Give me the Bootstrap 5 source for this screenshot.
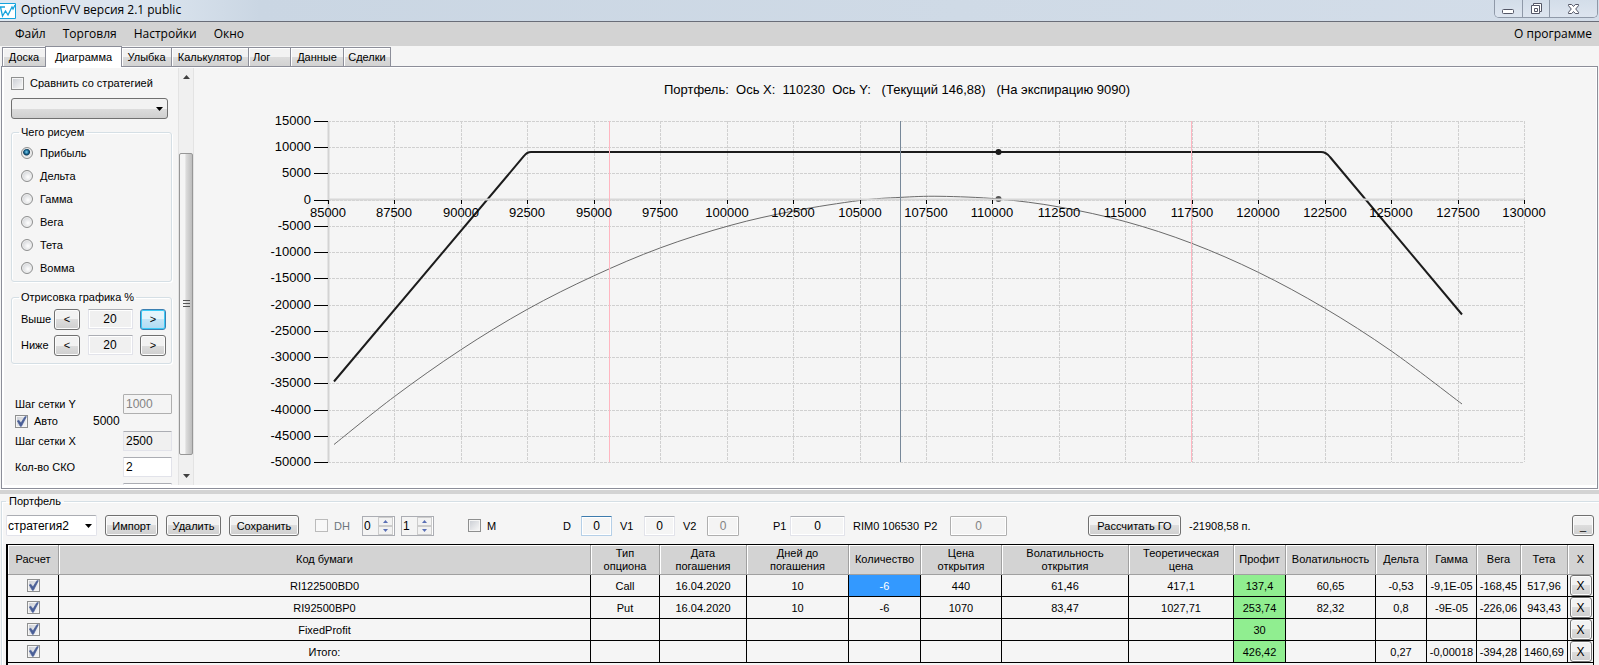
<!DOCTYPE html>
<html lang="ru">
<head>
<meta charset="utf-8">
<meta name="viewport" content="width=device-width, initial-scale=1">
<title>OptionFVV версия 2.1 public</title>
<link href="https://cdn.jsdelivr.net/npm/bootstrap@5.3.0/dist/css/bootstrap.min.css" rel="stylesheet">
<style>
  :root { --face:#f5f5f5; --edge:#8c8e99; --line:#d5dfe5; }
  body { height:100vh; background:var(--face); color:#000; font:11px/14px "Liberation Sans",Arial,sans-serif; overflow:hidden; }
  button, input, select { font:inherit; color:inherit; }

  /* window frame */
  .titlebar { height:22px; background:linear-gradient(90deg,#dfe7f0 0,#dbe4ee 150px,#cad6e3 260px,#cfdae6 60%,#d3dde9); border-bottom:1px solid #696d78; font:12px/20px "Open Sans","Noto Sans",sans-serif; }
  .titlebar > svg { flex:none; margin:3px 5px 0 0; }
  .winbtns { height:18px; border:1px solid #8f99a8; border-top:0; border-radius:0 0 5px 5px; overflow:hidden; margin-right:1px; }
  .winbtns button { border:0; border-left:1px solid #8f99a8; padding:0; background:linear-gradient(#d3dde9,#dde5ef); width:27px; }
  .winbtns button:first-child { border-left:0; }
  .winbtns button:last-child { width:48px; }
  .winbtns svg { display:block; margin:0 auto; }
  .menubar { height:24px; background:#d3d3d3; font:12px/24px "Open Sans","Noto Sans",sans-serif; padding:0 7px 0 15px; gap:17px; }
  .menubar a { color:#000; text-decoration:none; }

  /* tabs */
  .tabstrip { height:20px; padding-left:2px; }
  .tabstrip button { height:19px; border:1px solid var(--edge); border-bottom:0; margin-right:-1px; padding:0; background:linear-gradient(#f2f2f2 50%,#dcdcdc 50%,#d2d2d2); box-shadow:inset 1px 1px #fff; line-height:18px; white-space:nowrap; }
  .tabstrip button.active { height:21px; background:#fff; margin-bottom:-1px; position:relative; z-index:1; }
  .page { border:1px solid var(--edge); margin:0 1px; padding:1px 1px 3px 2px; background:#fff; min-height:0; }
  .page > div { background:var(--face); }

  /* side panel */
  .side { width:174px; overflow:hidden; padding:0 6px 0 7px; }
  .side > * { flex:none; }
  .frame-box { border:1px solid var(--line); border-radius:3px; box-shadow:1px 1px #fff, inset 1px 1px #fff; min-width:0; padding:0 9px 2px; margin-top:6px; }
  .frame-box legend { float:none; width:auto; margin:0 0 2px -2px; font-size:11px; line-height:14px; padding:0 2px; }
  .frame-box.range { padding:0 5px 5px 9px; margin-top:8px; }
  .tick { appearance:none; flex:none; width:13px; height:13px; margin:0; border:1px solid #8e8f8f; background:linear-gradient(135deg,#cdd0d6,#f6f6f6) content-box #f4f4f4; padding:1px; }
  .tick:checked { background:url("data:image/svg+xml,%3Csvg xmlns='http://www.w3.org/2000/svg' viewBox='0 0 11 11'%3E%3Cpath d='M2 5l1.2-.6L5 6.8 8.4 1.4h1.2L5.4 9.6h-.9z' fill='%234a5f97' stroke='%234a5f97' stroke-width='.6'/%3E%3C/svg%3E") border-box, linear-gradient(135deg,#cdd0d6,#f6f6f6) content-box #f4f4f4; }
  .tick:disabled { border-color:#bbb; background:#f8f8f8; }
  .tick-row { gap:6px; }
  .dot { appearance:none; flex:none; width:12px; height:12px; margin:0; border:1px solid #8e8f8f; border-radius:50%; background:radial-gradient(circle at 60% 60%,#fff,#c3c6cb); box-shadow:inset 0 0 0 1px #eee; }
  .dot:checked { background:radial-gradient(circle at 45% 40%,#7fd0f0 0,#1a6a94 2px,#0d3a58 3px,#e8e8e8 4px); }
  .radio-row { height:23px; gap:7px; }
  .combo { appearance:none; border:1px solid #707070; border-radius:3px; padding:0 4px; height:21px; background:url("data:image/svg+xml,%3Csvg xmlns='http://www.w3.org/2000/svg' width='7' height='4'%3E%3Cpath d='M0 0h7L3.5 4z'/%3E%3C/svg%3E") right 4px center no-repeat, linear-gradient(#f2f2f2 50%,#dddddd 50%,#cfcfcf); }
  .combo-flat { background-image:url("data:image/svg+xml,%3Csvg xmlns='http://www.w3.org/2000/svg' width='7' height='4'%3E%3Cpath d='M0 0h7L3.5 4z'/%3E%3C/svg%3E"); background-color:#fff; border-color:#e2e3ea; border-top-color:#abadb3; border-radius:2px; padding:0 1px; width:91px; }
  .pushbtn { border:1px solid #707070; border-radius:3px; padding:0; height:21px; line-height:18px; background:linear-gradient(#f2f2f2 50%,#dddddd 50%,#cfcfcf); box-shadow:inset 0 0 0 1px #fcfcfc; white-space:nowrap; flex:none; }
  .pushbtn.hot { border-color:#3c7fb1; background:linear-gradient(#e5f5fc 50%,#c4e5f6 50%,#b0dcf4); box-shadow:inset 0 0 0 1px #3ccbf7; }
  .pushbtn.step { width:26px; }
  .field { border:1px solid #e2e3ea; border-top-color:#abadb3; border-radius:1px; height:20px; padding:0 2px; min-width:0; background:#fff; flex:none; }
  .field.flat { background:var(--face); text-align:center; box-shadow:inset 0 0 0 1px #fff; }
  .field.ro { background:#f0f0f0; }
  .field:disabled { border-color:#afafaf; color:#838383; background:#f4f4f4; }
  .field.focused { border-color:#b5cfe7; border-top-color:#3d7bad; }
  .w-field { width:49px; font-size:12px; }
  .digits { font-size:12px; }
  .param { height:26px; }
  .settings { margin-top:30px; padding-left:4px; }

  /* scroll bar */
  .scroller { width:16px; background:#f0f0f0 !important; border-left:1px solid #e3e3e3; border-right:1px solid #e3e3e3; flex:none; }
  .scroller button { border:0; padding:0; height:18px; background:none; width:14px; }
  .scroller svg { display:block; margin:0 auto; }
  .thumb { border:1px solid #979797; border-radius:2px; background:linear-gradient(90deg,#f5f5f5 40%,#dcdcdc 50%,#bdbdbd); flex:302 0 0; }
  .track-a { flex:67 0 0; }
  .track-b { flex:12 0 0; }
  .chart text { font-family:"Liberation Sans",Arial,sans-serif; font-size:13px; }
  .splitbar { height:5px; border-top:1px solid #fff; background:#d3d3d3; flex:none; }

  /* portfolio */
  .portfolio { margin:0 0 0 1px; padding:0 5px 0 4px; border:1px solid var(--line); border-bottom:0; border-right:0; box-shadow:inset 1px 1px #fff; flex:none; min-width:0; height:171px; }
  .portfolio > legend { float:none; width:auto; margin:0; font-size:11px; line-height:15px; padding:0 3px; }
  .toolbar { height:35px; padding-bottom:2px; white-space:nowrap; }
  .toolbar label { flex:none; }
  .spin { width:33px; height:20px; border:1px solid #abadb3; background:#fff; flex:none; }
  .spin + .spin { margin-left:6px; }
  .spin input { border:0; padding:0 0 0 1px; width:15px; background:#f4f4f4; font-size:12px; }
  .spin button { border:1px solid #ccc; padding:0; flex:1; background:#f2f2f2; width:15px; min-height:0; }
  .spin svg { display:block; margin:0 auto; }
  .far { margin-left:34px; }
  .calc { width:93px; margin-left:81px; }
  .grid { --bs-table-bg:var(--face); --bs-table-color:#000; margin:0; table-layout:fixed; border:1px solid #000; border-left-width:2px; border-bottom:0; text-align:center; border-collapse:separate; border-spacing:0; }
  .grid > :not(caption) > * > * { padding:0; vertical-align:middle; white-space:nowrap; }
  .grid thead th { font-weight:400; line-height:13px; height:30px; background:#d3d3d3; border:0; border-bottom:1px solid #a0a0a0; border-right:1px solid #a0a0a0; box-shadow:inset 1px 1px #fff; }
  .grid tbody td { height:22px; border:0; border-bottom:1px solid #000; border-right:1px solid #000; }
  .grid tr > :last-child { border-right:0; }
  .grid td.gain { background:#90ee90; }
  .grid td.picked { background:#3399ff; color:#fff; }
  .grid .tick { display:block; margin:0 auto; }
  .grid .pushbtn { width:22px; height:21px; display:block; margin:0 auto; font-size:12px; }
  .tail td { height:3px !important; border-bottom:0 !important; border-right:0 !important; }
</style>
</head>
<body class="d-flex flex-column">

<header class="titlebar d-flex flex-shrink-0">
  <svg width="16" height="16" viewBox="0 0 16 16"><path d="M0 .5h15.500v15H0" fill="#fff" stroke="#17a3dd"/><path d="M0 4h5M.5 4l2 9 3-5 2.500 4 4-8 1 2 2-4" fill="none" stroke="#17a3dd" stroke-width="1.300"/></svg>
  <span>OptionFVV версия 2.1 public</span>
  <div class="winbtns d-flex ms-auto">
    <button type="button" aria-label="Свернуть"><svg width="13" height="15" viewBox="0 0 13 15"><rect x=".5" y="8.500" width="11" height="4" rx="1" fill="#fff" stroke="#535666"/></svg></button>
    <button type="button" aria-label="Развернуть"><svg width="13" height="15" viewBox="0 0 13 15"><path d="M3.500 2.500h8v8h-2v2h-8v-8h2z" fill="#fff" stroke="#535666"/><path d="M3.500 4.500h6v6M4.500 7.500h3v3h-3z" fill="none" stroke="#535666"/></svg></button>
    <button type="button" aria-label="Закрыть"><svg width="13" height="15" viewBox="0 0 13 15"><path d="M1.500 3.500h3.200l1.800 2 1.800-2h3.200v1.200L8.700 8l2.800 3.300v1.200H8.300l-1.800-2-1.800 2H1.500v-1.200L4.300 8 1.500 4.700z" fill="#fff" stroke="#535666"/></svg></button>
  </div>
</header>

<nav class="menubar d-flex flex-shrink-0">
  <a href="#">Файл</a><a href="#">Торговля</a><a href="#">Настройки</a><a href="#">Окно</a>
  <a href="#" class="ms-auto">О программе</a>
</nav>

<div class="tabstrip d-flex align-items-end flex-shrink-0" role="tablist">
  <button role="tab" style="width:44px">Доска</button>
  <button role="tab" class="active" style="width:77px">Диаграмма</button>
  <button role="tab" style="width:51px">Улыбка</button>
  <button role="tab" style="width:78px">Калькулятор</button>
  <button role="tab" class="text-start ps-1" style="width:43px">Лог</button>
  <button role="tab" style="width:54px">Данные</button>
  <button role="tab" style="width:48px">Сделки</button>
</div>

<main class="page d-flex flex-grow-1">
  <div class="side d-flex flex-column flex-shrink-0">
    <label class="tick-row d-flex align-items-center mt-2"><input type="checkbox" class="tick">Сравнить со стратегией</label>
    <select class="combo mt-2 me-1" aria-label="Стратегия"><option></option></select>

    <fieldset class="frame-box">
      <legend>Чего рисуем</legend>
      <label class="radio-row d-flex align-items-center"><input type="radio" name="what" class="dot" checked>Прибыль</label>
      <label class="radio-row d-flex align-items-center"><input type="radio" name="what" class="dot">Дельта</label>
      <label class="radio-row d-flex align-items-center"><input type="radio" name="what" class="dot">Гамма</label>
      <label class="radio-row d-flex align-items-center"><input type="radio" name="what" class="dot">Вега</label>
      <label class="radio-row d-flex align-items-center"><input type="radio" name="what" class="dot">Тета</label>
      <label class="radio-row d-flex align-items-center"><input type="radio" name="what" class="dot">Вомма</label>
    </fieldset>

    <fieldset class="frame-box range">
      <legend>Отрисовка графика %</legend>
      <div class="param d-flex align-items-center">
        <label for="up" style="width:33px">Выше</label><button class="pushbtn step">&lt;</button>
        <input id="up" class="field flat ro digits mx-auto" style="width:45px" value="20"><button class="pushbtn step hot">&gt;</button>
      </div>
      <div class="param d-flex align-items-center">
        <label for="down" style="width:33px">Ниже</label><button class="pushbtn step">&lt;</button>
        <input id="down" class="field flat ro digits mx-auto" style="width:45px" value="20"><button class="pushbtn step">&gt;</button>
      </div>
    </fieldset>

    <div class="settings d-flex flex-column">
      <div class="d-flex align-items-center justify-content-between"><label for="gy">Шаг сетки Y</label><input id="gy" class="field w-field" value="1000" disabled></div>
      <div class="d-flex align-items-center"><label class="tick-row d-flex align-items-center" style="width:78px"><input type="checkbox" class="tick" checked>Авто</label><span class="digits">5000</span></div>
      <div class="param d-flex align-items-center justify-content-between"><label for="gx">Шаг сетки X</label><input id="gx" class="field ro w-field" value="2500"></div>
      <div class="param d-flex align-items-center justify-content-between"><label for="sko">Кол-во СКО</label><input id="sko" class="field w-field" value="2"></div>
      <div class="param d-flex align-items-center justify-content-end"><input class="field w-field" aria-label="Параметр"></div>
    </div>
  </div>

  <div class="scroller d-flex flex-column">
    <button aria-label="Вверх"><svg width="7" height="4" viewBox="0 0 7 4"><path d="M0 4L3.500 0 7 4z" fill="#404040"/></svg></button>
    <div class="track-a"></div>
    <div class="thumb d-flex align-items-center justify-content-center"><svg width="7" height="8" viewBox="0 0 7 8"><path d="M0 .5h7M0 3.500h7M0 6.500h7" stroke="#555"/></svg></div>
    <div class="track-b"></div>
    <button aria-label="Вниз"><svg width="7" height="4" viewBox="0 0 7 4"><path d="M0 0L3.500 4 7 0z" fill="#404040"/></svg></button>
  </div>

  <div class="flex-grow-1" style="min-width:0">
    <svg id="chart" class="chart d-block w-100 h-100" viewBox="194 68 1402 417"></svg>
  </div>
</main>

<div class="splitbar"></div>

<fieldset class="portfolio">
  <legend>Портфель</legend>
  <div class="toolbar d-flex align-items-center">
    <select class="combo combo-flat digits" aria-label="Стратегия"><option>стратегия2</option></select>
    <button class="pushbtn ms-2" style="width:53px">Импорт</button>
    <button class="pushbtn ms-2" style="width:55px">Удалить</button>
    <button class="pushbtn ms-2" style="width:70px">Сохранить</button>
    <label class="tick-row d-flex align-items-center ms-3 text-secondary" style="width:47px"><input type="checkbox" class="tick" disabled>DH</label>
    <div class="spin d-flex"><input value="0" aria-label="DH от"><div class="d-flex flex-column"><button aria-label="Больше"><svg width="5" height="3" viewBox="0 0 5 3"><path d="M0 3L2.500 0 5 3z" fill="#5a6fb5"/></svg></button><button aria-label="Меньше"><svg width="5" height="3" viewBox="0 0 5 3"><path d="M0 0L2.500 3 5 0z" fill="#5a6fb5"/></svg></button></div></div>
    <div class="spin d-flex"><input value="1" aria-label="DH до"><div class="d-flex flex-column"><button aria-label="Больше"><svg width="5" height="3" viewBox="0 0 5 3"><path d="M0 3L2.500 0 5 3z" fill="#5a6fb5"/></svg></button><button aria-label="Меньше"><svg width="5" height="3" viewBox="0 0 5 3"><path d="M0 0L2.500 3 5 0z" fill="#5a6fb5"/></svg></button></div></div>
    <label class="tick-row d-flex align-items-center far" style="width:95px"><input type="checkbox" class="tick">M</label>
    <label for="fd" style="width:18px">D</label><input id="fd" class="field flat focused digits" style="width:31px" value="0">
    <label for="fv1" class="ms-2" style="width:24px">V1</label><input id="fv1" class="field flat digits" style="width:31px" value="0">
    <label for="fv2" class="ms-2" style="width:24px">V2</label><input id="fv2" class="field flat digits" style="width:32px" value="0" disabled>
    <label for="fp1" class="far" style="width:17px">P1</label><input id="fp1" class="field flat digits" style="width:55px" value="0">
    <span class="ms-2" style="width:71px">RIM0 106530</span>
    <label for="fp2" style="width:26px">P2</label><input id="fp2" class="field flat digits" style="width:57px" value="0" disabled>
    <button class="pushbtn calc">Рассчитать ГО</button>
    <span class="ms-2">-21908,58 п.</span>
    <button class="pushbtn ms-auto" style="width:22px">_</button>
  </div>

  <table class="table grid">
    <colgroup><col style="width:51px"><col><col style="width:69px"><col style="width:87px"><col style="width:102px"><col style="width:72px"><col style="width:81px"><col style="width:127px"><col style="width:105px"><col style="width:52px"><col style="width:90px"><col style="width:51px"><col style="width:50px"><col style="width:44px"><col style="width:47px"><col style="width:25px"></colgroup>
    <thead><tr><th>Расчет</th><th>Код бумаги</th><th>Тип<br>опциона</th><th>Дата<br>погашения</th><th>Дней до<br>погашения</th><th>Количество</th><th>Цена<br>открытия</th><th>Волатильность<br>открытия</th><th>Теоретическая<br>цена</th><th>Профит</th><th>Волатильность</th><th>Дельта</th><th>Гамма</th><th>Вега</th><th>Тета</th><th>X</th></tr></thead>
    <tbody>
      <tr><td><input type="checkbox" class="tick" checked aria-label="Расчет"></td><td>RI122500BD0</td><td>Call</td><td>16.04.2020</td><td>10</td><td class="picked">-6</td><td>440</td><td>61,46</td><td>417,1</td><td class="gain">137,4</td><td>60,65</td><td>-0,53</td><td>-9,1E-05</td><td>-168,45</td><td>517,96</td><td><button class="pushbtn">X</button></td></tr>
      <tr><td><input type="checkbox" class="tick" checked aria-label="Расчет"></td><td>RI92500BP0</td><td>Put</td><td>16.04.2020</td><td>10</td><td>-6</td><td>1070</td><td>83,47</td><td>1027,71</td><td class="gain">253,74</td><td>82,32</td><td>0,8</td><td>-9E-05</td><td>-226,06</td><td>943,43</td><td><button class="pushbtn">X</button></td></tr>
      <tr><td><input type="checkbox" class="tick" checked aria-label="Расчет"></td><td>FixedProfit</td><td></td><td></td><td></td><td></td><td></td><td></td><td></td><td class="gain">30</td><td></td><td></td><td></td><td></td><td></td><td><button class="pushbtn">X</button></td></tr>
      <tr><td><input type="checkbox" class="tick" checked aria-label="Расчет"></td><td>Итого:</td><td></td><td></td><td></td><td></td><td></td><td></td><td></td><td class="gain">426,42</td><td></td><td>0,27</td><td>-0,00018</td><td>-394,28</td><td>1460,69</td><td><button class="pushbtn">X</button></td></tr>
      <tr class="tail"><td colspan="16"></td></tr>
    </tbody>
  </table>
</fieldset>

<script src="https://cdn.jsdelivr.net/npm/bootstrap@5.3.0/dist/js/bootstrap.bundle.min.js"></script>
<script>
  // Plot frame and axis ranges
  const L = 328, R = 1524, T = 121, B = 462;
  const X = v => L + (v - 85000) * (R - L) / 45000;
  const Y = v => T + (15000 - v) * (B - T) / 65000;
  const snap = n => Math.round(n) + .5;
  const out = [];
  const line = (x1, y1, x2, y2, attrs) => out.push(`<line x1="${x1}" y1="${y1}" x2="${x2}" y2="${y2}" ${attrs}/>`);

  out.push('<text x="897" y="94" text-anchor="middle" xml:space="preserve">Портфель:  Ось X:  110230  Ось Y:   (Текущий 146,88)   (На экспирацию 9090)</text>');

  // Dashed grid
  const dash = 'stroke="#d0d0d0" stroke-dasharray="3 1"';
  for (let v = 87500; v <= 130000; v += 2500) line(snap(X(v)), T, snap(X(v)), B, dash);
  for (let v = -50000; v <= 15000; v += 5000) line(L, snap(Y(v)), R, snap(Y(v)), dash);

  // Value at expiry
  out.push('<path d="M334 381.500L524 156Q527 152 531 152H1321Q1326 152 1330 157L1462 314.500" fill="none" stroke="#1c1c1c" stroke-width="2"/>');

  // Current value: smooth curve through sampled points
  const p = [[334,444.5],[394.5,396.5],[460.5,350],[527,309.5],[593.5,276],[660.5,247.8],[730,225.5],[793.5,211],[859.5,200.5],[900,197.4],[940,196.3],[998.7,199],[1059.5,207],[1125.7,221.7],[1191.7,243.3],[1258.3,272.3],[1324.3,308],[1391.3,351],[1462,404]];
  let d = `M${p[0]}`;
  for (let i = 0; i < p.length - 1; i++) {
    const a = p[i - 1] || p[i], b = p[i], c = p[i + 1], e = p[i + 2] || c;
    d += `C${b[0] + (c[0] - a[0]) / 6} ${b[1] + (c[1] - a[1]) / 6} ${c[0] - (e[0] - b[0]) / 6} ${c[1] - (e[1] - b[1]) / 6} ${c}`;
  }
  out.push(`<path d="${d}" fill="none" stroke="#6a6a6a"/>`);
  out.push('<circle cx="998.500" cy="152" r="3" fill="#1c1c1c"/><circle cx="998.500" cy="199" r="3" fill="#555"/>');

  // Axes
  line(L + .5, T, L + .5, B, 'stroke="#d3d3d3" stroke-width="2"');
  line(L, 199.5, R, 199.5, 'stroke="#d8d8d8" stroke-width="2"');

  // Deviation bounds and current price
  line(609.5, T, 609.5, B, 'stroke="#ffb6c1"');
  line(1191.5, T, 1191.5, B, 'stroke="#ffb6c1"');
  line(900.5, T, 900.5, B, 'stroke="#778899"');

  // Tick marks and labels
  for (let v = -50000; v <= 15000; v += 5000) {
    line(L - 14, snap(Y(v)), L, snap(Y(v)), 'stroke="#000"');
    out.push(`<text x="311" y="${Math.round(Y(v)) + 4}" text-anchor="end">${v}</text>`);
  }
  for (let v = 85000; v <= 130000; v += 2500) {
    line(snap(X(v)), 200, snap(X(v)), 204, 'stroke="#000"');
    out.push(`<text x="${Math.round(X(v))}" y="217" text-anchor="middle">${v}</text>`);
  }
  document.getElementById('chart').innerHTML = out.join('');
</script>
</body>
</html>
